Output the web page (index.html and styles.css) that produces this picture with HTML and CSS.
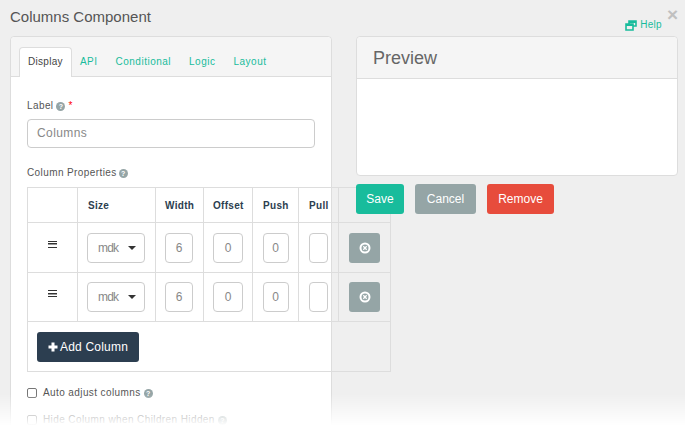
FILE: index.html
```html
<!DOCTYPE html>
<html lang="en">
<head>
<meta charset="utf-8">
<title>Columns Component</title>
<link rel="stylesheet" href="styles.css">
</head>
<body>
<div class="dialog">
  <a class="close">×</a>
  <h1 class="title">Columns Component</h1>
  <a class="help">
    <svg class="help-icon" width="12" height="11" viewBox="0 0 12 11"><path d="M4 3.500V1h7v5H8.500M1 4h7v6H1z" fill="none" stroke="#18bc9c" stroke-width="1.600"/><path d="M1 4h7v2H1zM4 1h7v2H4z" fill="#18bc9c"/></svg>
    Help
  </a>
  <div class="columns">
    <section class="card edit">
      <nav class="tabs">
        <a class="tab active">Display</a>
        <a class="tab">API</a>
        <a class="tab">Conditional</a>
        <a class="tab">Logic</a>
        <a class="tab">Layout</a>
      </nav>
      <div class="pane">
        <div class="label">Label <i class="q">?</i> <b class="req">*</b></div>
        <div class="input">Columns</div>
        <div class="label props">Column Properties <i class="q">?</i></div>
        <table class="grid">
          <colgroup>
            <col class="c1"><col class="c2"><col class="c3"><col class="c4"><col class="c5"><col class="c6"><col class="c7">
          </colgroup>
          <thead>
            <tr><th></th><th>Size</th><th class="tight">Width</th><th class="tight">Offset</th><th>Push</th><th>Pull</th><th></th></tr>
          </thead>
          <tbody>
            <tr>
              <td class="drag"><span class="bars"></span></td>
              <td><div class="select"><span class="sel-text">mdk</span><span class="caret"></span></div></td>
              <td><div class="num w">6</div></td>
              <td><div class="num o">0</div></td>
              <td><div class="num p">0</div></td>
              <td><div class="num s"></div></td>
              <td><div class="del"><svg width="12" height="12" viewBox="0 0 12 12"><circle cx="6" cy="6" r="4.500" fill="none" stroke="#fff" stroke-width="2"/><path d="M4.300 4.300l3.400 3.400M7.700 4.300l-3.400 3.400" stroke="#fff" stroke-width="1.300"/></svg></div></td>
            </tr>
            <tr>
              <td class="drag"><span class="bars"></span></td>
              <td><div class="select"><span class="sel-text">mdk</span><span class="caret"></span></div></td>
              <td><div class="num w">6</div></td>
              <td><div class="num o">0</div></td>
              <td><div class="num p">0</div></td>
              <td><div class="num s"></div></td>
              <td><div class="del"><svg width="12" height="12" viewBox="0 0 12 12"><circle cx="6" cy="6" r="4.500" fill="none" stroke="#fff" stroke-width="2"/><path d="M4.300 4.300l3.400 3.400M7.700 4.300l-3.400 3.400" stroke="#fff" stroke-width="1.300"/></svg></div></td>
            </tr>
          </tbody>
          <tfoot>
            <tr><td colspan="7" class="foot"><button class="add"><svg width="10" height="10" viewBox="0 0 10 10"><path d="M5 .5v9M.5 5h9" stroke="#fff" stroke-width="3"/></svg>Add Column</button></td></tr>
          </tfoot>
        </table>
        <label class="check"><span class="box"></span>Auto adjust columns <i class="q">?</i></label>
        <label class="check"><span class="box"></span>Hide Column when Children Hidden <i class="q">?</i></label>
      </div>
    </section>
    <aside class="side">
      <section class="card preview">
        <h2 class="preview-head">Preview</h2>
        <div class="preview-body"></div>
      </section>
      <div class="actions">
        <button class="btn save">Save</button>
        <button class="btn cancel">Cancel</button>
        <button class="btn remove">Remove</button>
      </div>
    </aside>
  </div>
</div>
<div class="fade"></div>
</body>
</html>
```

FILE: styles.css
```css
* { box-sizing: border-box; }
html, body { margin: 0; height: 429px; overflow: hidden; }
body { background: #efefef; font-family: "Liberation Sans", Arial, sans-serif; color: #555; position: relative; }
.dialog { padding: 0 7px 0 10px; position: relative; height: 429px; overflow: hidden; }
.title { margin: 0; height: 36px; padding-top: 8px; font-size: 15px; line-height: 18px; font-weight: 400; color: #555; }
.close { position: absolute; right: 7px; top: 5px; font-size: 19px; line-height: 20px; font-weight: 700; color: #c0c0c0; }
.help { position: absolute; right: 23px; top: 18px; display: flex; align-items: center; gap: 3px; font-size: 10px; line-height: 14px; color: #18bc9c; letter-spacing: .3px; }
.columns { display: flex; gap: 24px; align-items: flex-start; }
.card { background: #fff; border: 1px solid #ddd; border-radius: 4px; }
.edit { width: 322px; height: 420px; flex: none; }
.tabs { height: 40px; background: #f5f5f5; border-bottom: 1px solid #ddd; border-radius: 4px 4px 0 0; padding: 10px 8px 0; display: flex; }
.tab { font-size: 10px; line-height: 14px; padding: 8px 9px; color: #18bc9c; height: 30px; letter-spacing: .5px; }
.active { background: #fff; border: 1px solid #ddd; border-bottom: 0; border-radius: 4px 4px 0 0; color: #444; padding: 7px 8px 0; height: 30px; letter-spacing: .3px; margin-right: -1px; }
.pane { padding: 22px 16px 0; }
.label { font-size: 10px; line-height: 14px; color: #555; letter-spacing: .4px; display: flex; align-items: center; gap: 3px; }
.props { gap: 2px; }
.q { width: 9px; height: 9px; border-radius: 50%; background: #95a5a6; color: #fff; font: 700 7px/9px "Liberation Sans", sans-serif; text-align: center; display: inline-block; flex: none; letter-spacing: 0; }
.req { color: #f00; font-size: 10px; font-weight: 400; }
.input { margin-top: 6px; height: 29px; width: 288px; border: 1px solid #ccc; border-radius: 4px; padding: 0 9px; font-size: 12px; line-height: 27px; color: #888; letter-spacing: .4px; }
.props { margin-top: 18px; }
.grid { margin-top: 7px; border-collapse: collapse; table-layout: fixed; width: 363px; position: relative; }
.c1 { width: 50px; } .c2 { width: 78px; } .c3 { width: 48px; } .c4 { width: 49px; } .c5 { width: 46px; } .c6 { width: 40px; } .c7 { width: 52px; }
.grid th, .grid td { border: 1px solid #ddd; padding: 0; text-align: center; vertical-align: middle; }
.grid thead tr { height: 35px; }
.grid tbody tr { height: 50px; }
.grid tbody tr + tr { height: 49px; }
.grid th { font-size: 10px; font-weight: 700; color: #2c3e50; letter-spacing: .3px; text-align: left; padding-left: 10px; }
.grid th.tight { padding-left: 9px; }
.bars { display: block; width: 9px; height: 7px; margin: 0 auto 7px; border-top: 1.500px solid #333; border-bottom: 1.500px solid #333; background: linear-gradient(#333, #333) center / 100% 1.500px no-repeat; }
.select { width: 58px; height: 30px; margin-left: 9px; border: 1px solid #ccc; border-radius: 4px; font-size: 12px; line-height: 28px; color: #888; text-align: left; padding-left: 10px; display: flex; align-items: center; }
.sel-text { letter-spacing: -.8px; }
.caret { margin-left: 10px; border-top: 4px solid #333; border-left: 4px solid transparent; border-right: 4px solid transparent; }
.num { height: 30px; margin: 0 auto; border: 1px solid #ccc; border-radius: 4px; font-size: 12px; line-height: 28px; color: #888; }
.w { width: 28px; margin-left: 9px; } .o { width: 30px; } .p { width: 26px; } .s { width: 19px; margin-left: 10px; }
.del { width: 31px; height: 30px; margin: 0 auto; border-radius: 3px; background: #95a5a6; display: flex; align-items: center; justify-content: center; }
.grid .foot { height: 50px; text-align: left; padding-left: 9px; }
.add { height: 30px; width: 102px; background: #2c3e50; color: #fff; border: 0; border-radius: 3px; font: 12px "Liberation Sans", sans-serif; letter-spacing: .2px; padding: 0; display: flex; align-items: center; justify-content: center; gap: 2px; }
.check { display: flex; align-items: center; font-size: 10px; line-height: 14px; color: #555; letter-spacing: .4px; gap: 6px; margin-top: 14px; height: 14px; }
.check + .check { margin-top: 13px; }
.box { width: 10px; height: 10px; border: 1px solid #767676; border-radius: 2px; background: #fff; flex: none; }
.check .q { margin-left: -3px; }
.side { width: 322px; flex: none; position: relative; }
.preview { height: 140px; }
.preview-head { margin: 0; height: 42px; background: #f5f5f5; border-bottom: 1px solid #ddd; border-radius: 4px 4px 0 0; padding: 1px 16px 0; font-size: 18px; line-height: 41px; font-weight: 400; color: #666; }
.actions { margin-top: 8px; display: flex; gap: 11px; }
.btn { height: 30px; border: 0; border-radius: 3px; color: #fff; font: 12px "Liberation Sans", sans-serif; padding: 0; }
.save { width: 48px; background: #18bc9c; }
.cancel { width: 61px; background: #95a5a6; }
.remove { width: 67px; background: #e74c3c; }
.fade { position: absolute; left: 0; right: 0; bottom: 0; height: 35px; background: linear-gradient(rgba(255,255,255,0), #fff 90%); }
```
